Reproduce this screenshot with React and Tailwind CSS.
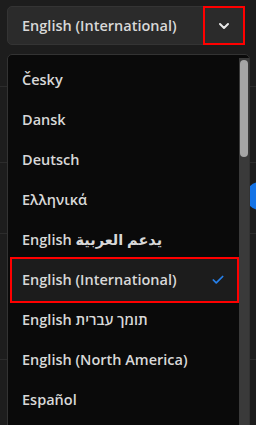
import { Check, ChevronDown } from "lucide-react";

const languages = [
    "Česky",
    "Dansk",
    "Deutsch",
    "Ελληνικά",
    "English يدعم العربية",
    "English (International)",
    "English תומך עברית",
    "English (North America)",
    "Español",
];

const selected = "English (International)";

export default function App() {
    return (
        <div
            className="relative w-[256px] h-[425px] overflow-hidden bg-[#1d1d1d] text-[#dcdcdc]"
            style={{ fontFamily: '"Open Sans", "DejaVu Sans", sans-serif' }}
        >
            {/* trigger */}
            <div className="pt-[6px] pl-[7px]">
                <div className="flex items-center w-[238px] h-[39px] rounded-[5px] border border-[#343434] bg-[#2b2b2b]">
                    <span className="flex-1 pl-[14px] text-[14.5px] font-semibold text-[#d8d8d8]">
                        English (International)
                    </span>
                    <div className="flex items-center justify-center w-[42px] h-[39px] border-2 border-[#ff0000] -mr-px">
                        <ChevronDown size={16} strokeWidth={3} className="text-[#e8e8e8]" />
                    </div>
                </div>
            </div>

            {/* settings page behind the menu */}
            <div className="flex flex-col">
                <div className="h-[42px] border-b border-[#2c2c2c]" />
                <div className="h-[76px] border-b border-[#2c2c2c]" />
                <div className="flex items-center justify-end h-[71px] border-b border-[#2c2c2c]">
                    <div className="w-[28px] h-[28px] -mr-[18px] -mt-[4px] rounded-full bg-[#1473e6]" />
                </div>
                <div className="h-[126px] border-b border-[#2c2c2c]" />
            </div>

            {/* dropdown menu */}
            <div className="absolute left-[7px] top-[54px] flex w-[243px] h-[400px] rounded-t-[5px] border border-[#333] bg-[#0a0a0a]">
                <div className="flex flex-col pt-[5px] pl-[2px] w-[232px]">
                    {languages.map((lang) =>
                        lang === selected ? (
                            <div
                                key={lang}
                                className="flex items-center justify-between h-[46px] -my-[3px] border-2 border-[#ff0000] bg-[#1c1c1c] pl-[10px] pr-[12px]"
                            >
                                <span className="text-[14.5px] font-semibold text-[#d8d8d8]">{lang}</span>
                                <Check size={14} strokeWidth={3} className="text-[#2680eb]" />
                            </div>
                        ) : (
                            <div
                                key={lang}
                                className="flex items-center h-[40px] pl-[12px] text-[14.5px] font-semibold text-[#d8d8d8]"
                            >
                                {lang}
                            </div>
                        )
                    )}
                </div>

                {/* scrollbar */}
                <div className="ml-auto mt-[3px] w-[10px] bg-[#3a3a3a]">
                    <div className="mx-[1px] mt-[2px] h-[97px] rounded-full bg-[#a6a6a6]" />
                </div>
            </div>
        </div>
    );
}
